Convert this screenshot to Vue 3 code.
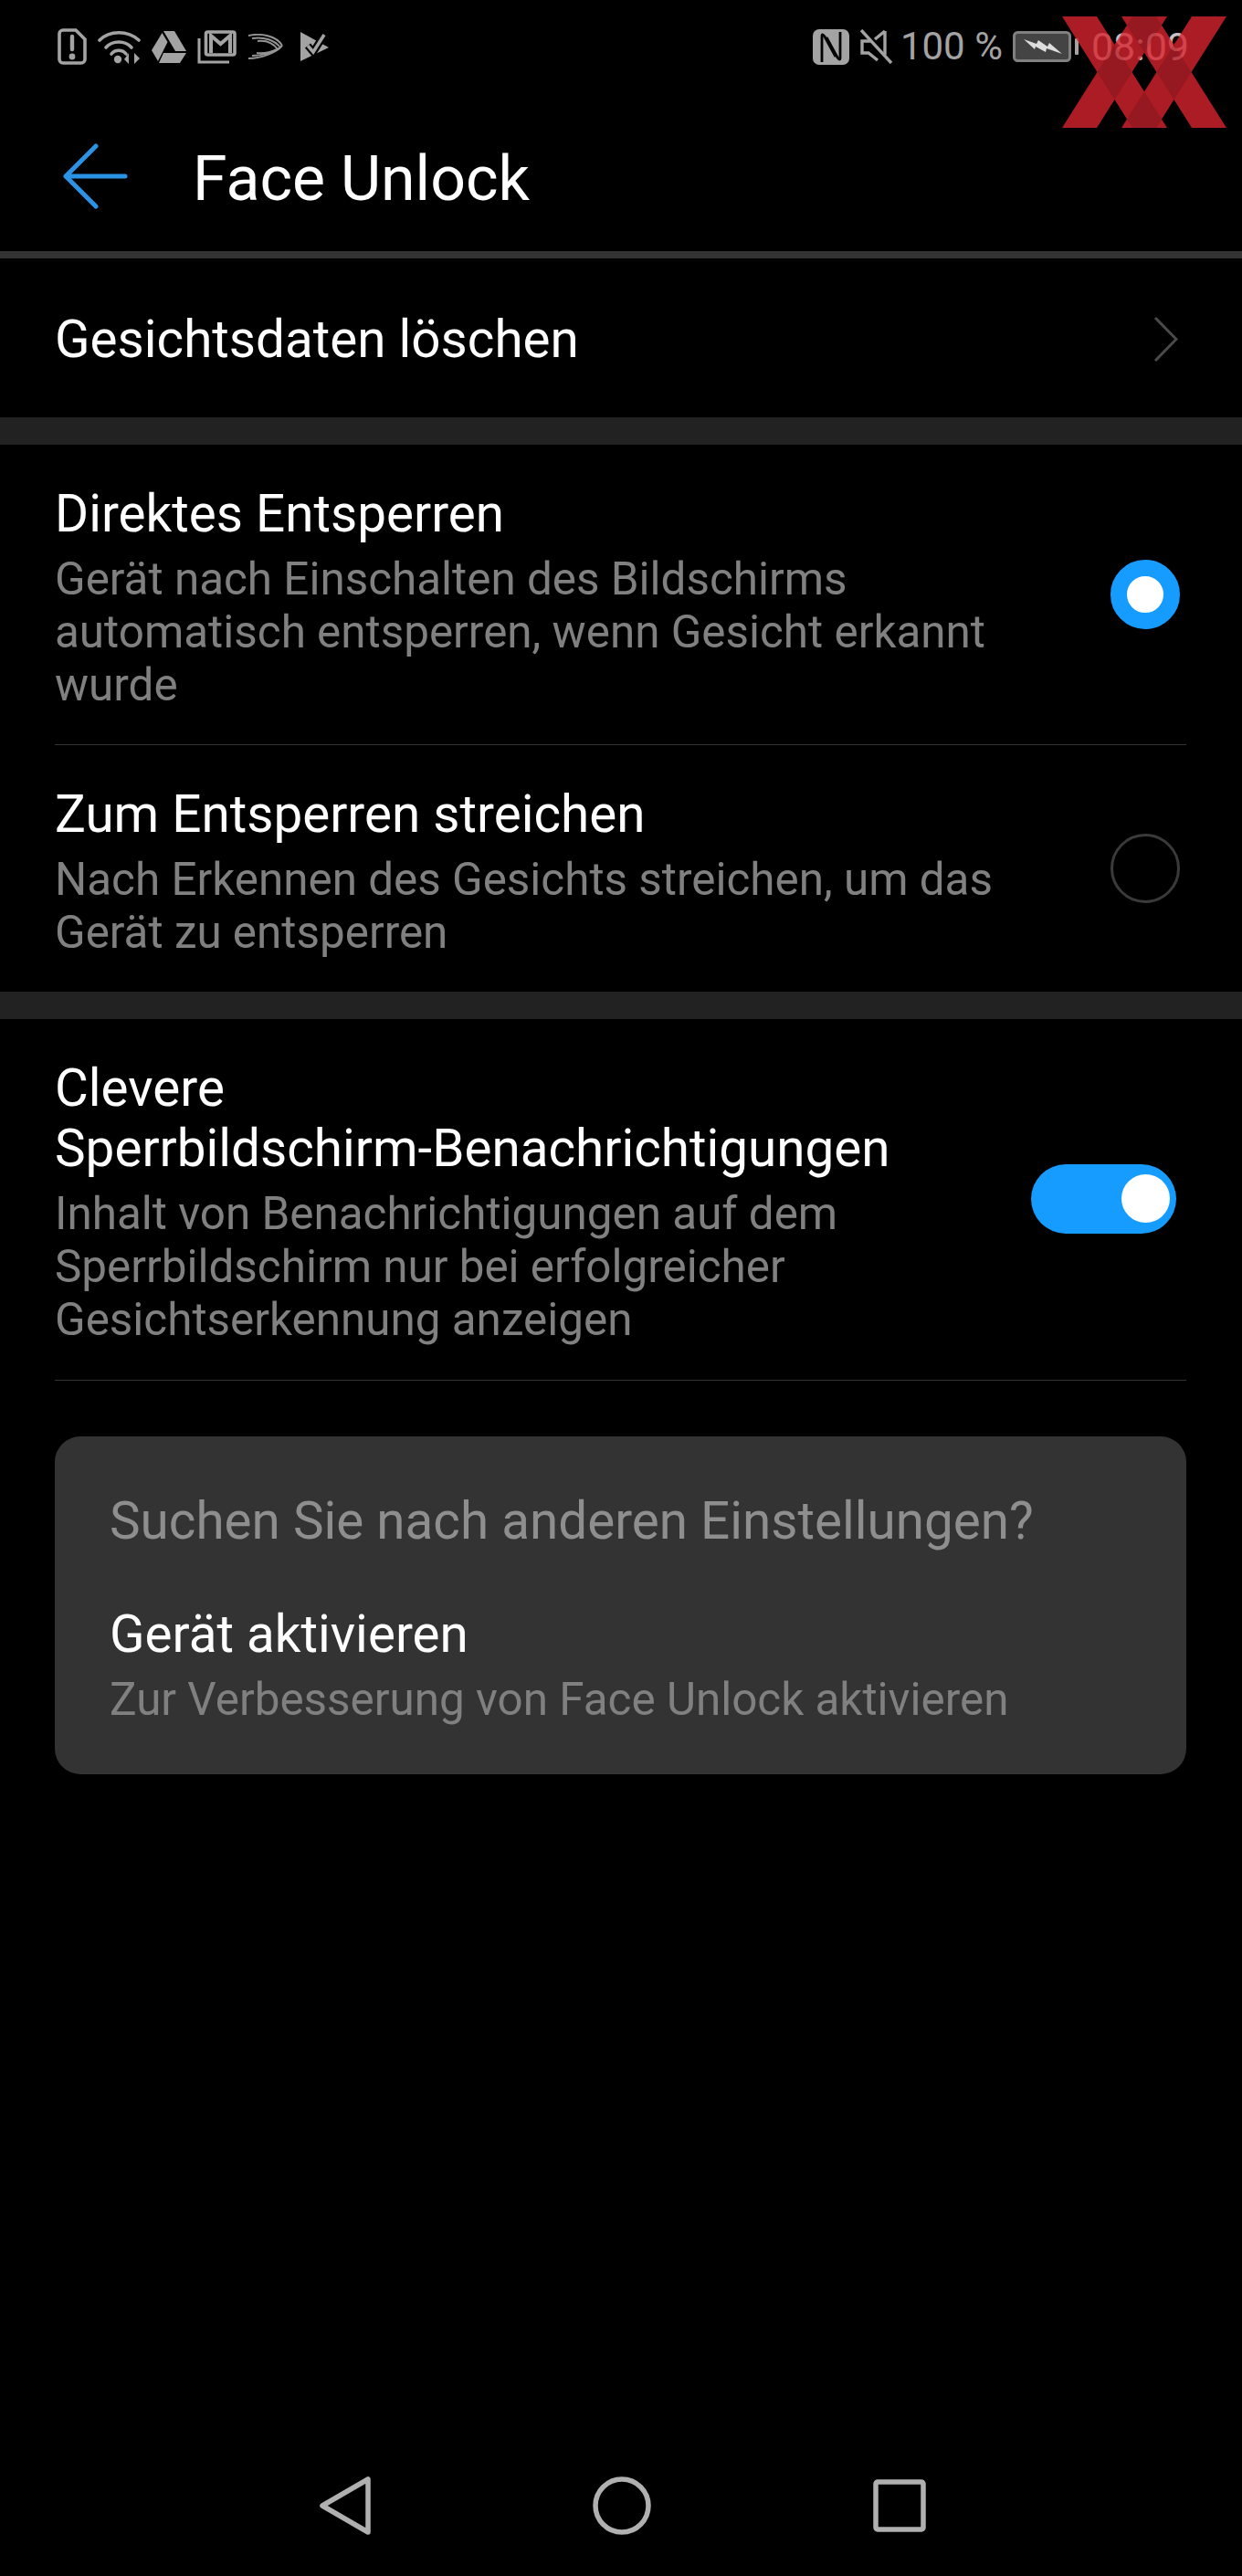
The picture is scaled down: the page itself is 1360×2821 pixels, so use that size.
<script setup>
const optionRows = [
  {
    title: 'Direktes Entsperren',
    desc: 'Gerät nach Einschalten des Bildschirms automatisch entsperren, wenn Gesicht erkannt wurde',
    checked: true,
  },
  {
    title: 'Zum Entsperren streichen',
    desc: 'Nach Erkennen des Gesichts streichen, um das Gerät zu entsperren',
    checked: false,
  },
];
</script>

<template>
  <div class="screen">
    <div class="status-bar">
      <div class="status-left">
        <svg class="ic" width="32" height="40" viewBox="0 0 32 40">
          <path d="M6 2H20L30 12V34a4 4 0 0 1-4 4H6a4 4 0 0 1-4-4V6a4 4 0 0 1 4-4Z" fill="none" stroke="#a3a3a3" stroke-width="3.6" />
          <path d="M16 9V23" stroke="#a3a3a3" stroke-width="4.4" stroke-linecap="round" />
          <circle cx="16" cy="31" r="3.4" fill="#a3a3a3" />
        </svg>
        <svg class="ic" width="47" height="39" viewBox="0 0 47 39">
          <path d="M2 12C13 1 33 1 45 12" fill="none" stroke="#a3a3a3" stroke-width="3.6" stroke-linecap="round" />
          <path d="M9 20C16 12 30 12 37 20" fill="none" stroke="#a3a3a3" stroke-width="3.6" stroke-linecap="round" />
          <path d="M15 27C19 22 27 22 31 27" fill="none" stroke="#a3a3a3" stroke-width="3.6" stroke-linecap="round" />
          <circle cx="22" cy="33" r="4.2" fill="#a3a3a3" />
          <path d="M34 26V38L29 33Z" fill="#a3a3a3" />
          <path d="M40 26V38L46 32Z" fill="#a3a3a3" />
        </svg>
        <svg class="ic" width="38" height="35" viewBox="0 0 38 35">
          <path d="M13 0H25L38 22H26Z" fill="#a3a3a3" />
          <path d="M11.500 2L17.500 12L7 33L0 21Z" fill="#a3a3a3" />
          <path d="M13 24H38L31 35H8Z" fill="#a3a3a3" />
        </svg>
        <svg class="ic" width="43" height="37" viewBox="0 0 43 37">
          <rect x="9.500" y="2" width="31.500" height="25" rx="2" fill="none" stroke="#a3a3a3" stroke-width="3.600" />
          <path d="M15 25V6L25.500 15L36 6V25" fill="none" stroke="#a3a3a3" stroke-width="4" />
          <path d="M2 9V35H35" fill="none" stroke="#a3a3a3" stroke-width="3" />
        </svg>
        <svg class="ic" width="39" height="28" viewBox="0 0 39 28">
          <g fill="none" stroke="#949494" stroke-width="2">
            <path d="M1 2C14 -1 32 2 38 13" />
            <path d="M5 5C18 3 30 7 36 15" />
            <path d="M11 8C20 7 28 10 33 17" />
            <path d="M38 13C32 20 16 27 1 27" />
            <path d="M36 15C28 20 16 24 5 24" />
            <path d="M33 17C26 20 18 22 10 21" />
          </g>
        </svg>
        <svg class="ic play" width="31" height="32" viewBox="0 0 31 32">
          <path d="M0 0L31 17L0 32Z" fill="#a3a3a3" />
          <path d="M8 15L14 22L26 3" fill="none" stroke="#000" stroke-width="8" />
          <path d="M8 15L14 22L26 3" fill="none" stroke="#a3a3a3" stroke-width="3.600" />
        </svg>
      </div>
      <div class="status-right">
        <svg class="ic" width="40" height="39" viewBox="0 0 40 39">
          <rect width="40" height="39" rx="7" fill="#a3a3a3" />
          <path d="M10 36V8Q10 4 13 8L25 30" fill="none" stroke="#000" stroke-width="2.800" />
          <path d="M30 3V31Q30 35 27 31L15 9" fill="none" stroke="#000" stroke-width="2.800" />
        </svg>
        <svg class="ic" width="37" height="38" viewBox="0 0 37 38">
          <path d="M28 2V28M28 2L17 11M12 13H3V26H10L20 34" fill="none" stroke="#a3a3a3" stroke-width="3.400" />
          <path d="M2 1L35 37" stroke="#a3a3a3" stroke-width="3.400" />
        </svg>
        <span class="percent">100 %</span>
        <svg class="ic" width="72" height="34" viewBox="0 0 72 34">
          <rect x="1.500" y="1.500" width="61" height="31" rx="4" fill="#444" stroke="#808080" stroke-width="3" />
          <path d="M12 9L26 14L28 10L38 17L40 13L54 25L37 19L36 23L25 17L24 20Z" fill="#ddd" />
          <rect x="68" y="8" width="4" height="18" rx="1" fill="#a3a3a3" />
        </svg>
        <span class="time">08:09</span>
      </div>
      <svg class="watermark" width="180" height="122" viewBox="0 0 180 122">
        <defs>
          <clipPath id="wmA"><polygon points="0,0 38,0 115,122 77,122" /></clipPath>
          <clipPath id="wmB"><polygon points="77,0 115,0 38,122 0,122" /></clipPath>
          <clipPath id="wmC"><polygon points="65,0 103,0 180,122 142,122" /></clipPath>
        </defs>
        <g opacity="0.8">
          <g fill="#d7232d">
            <polygon points="0,0 38,0 115,122 77,122" />
            <polygon points="77,0 115,0 38,122 0,122" />
            <polygon points="65,0 103,0 180,122 142,122" />
            <polygon points="142,0 180,0 103,122 65,122" />
          </g>
          <g fill="#bc1f28">
            <polygon points="0,0 38,0 115,122 77,122" clip-path="url(#wmB)" />
            <polygon points="142,0 180,0 103,122 65,122" clip-path="url(#wmC)" />
            <polygon points="65,0 103,0 180,122 142,122" clip-path="url(#wmB)" />
            <polygon points="142,0 180,0 103,122 65,122" clip-path="url(#wmA)" />
          </g>
        </g>
      </svg>
    </div>

    <header class="app-bar">
      <svg class="back" width="72" height="72" viewBox="0 0 72 72">
        <path d="M37 3L4 36L37 69M4 36H69" fill="none" stroke="#2b93e6" stroke-width="5" stroke-linecap="round" stroke-linejoin="round" />
      </svg>
      <h1 class="page-title">Face Unlock</h1>
    </header>
    <div class="band thin"></div>

    <div class="link-row">
      <span class="row-title">Gesichtsdaten löschen</span>
      <svg width="27" height="49" viewBox="0 0 27 49">
        <path d="M2 1L25 24.500L2 48" fill="none" stroke="#4a4a4a" stroke-width="3" />
      </svg>
    </div>
    <div class="band"></div>

    <section class="group">
      <div v-for="row in optionRows" :key="row.title" class="row">
        <div class="row-text">
          <div class="row-title">{{ row.title }}</div>
          <div class="row-desc">{{ row.desc }}</div>
        </div>
        <div class="radio" :class="{ on: row.checked }"></div>
      </div>
    </section>
    <div class="band"></div>

    <section class="group">
      <div class="row tall">
        <div class="row-text">
          <div class="row-title">Clevere<br />Sperrbildschirm-Benachrichtigungen</div>
          <div class="row-desc">Inhalt von Benachrichtigungen auf dem Sperrbildschirm nur bei erfolgreicher Gesichtserkennung anzeigen</div>
        </div>
        <div class="switch"><div class="knob"></div></div>
      </div>
    </section>

    <div class="hint-card">
      <div class="hint-head">Suchen Sie nach anderen Einstellungen?</div>
      <div class="row-title hint-title">Gerät aktivieren</div>
      <div class="hint-sub">Zur Verbesserung von Face Unlock aktivieren</div>
    </div>

    <nav class="nav-bar">
      <svg width="56" height="64" viewBox="0 0 56 64">
        <path d="M53 3V61L3 32Z" fill="none" stroke="#b0b0b0" stroke-width="5.500" stroke-linejoin="round" />
      </svg>
      <svg width="64" height="64" viewBox="0 0 64 64">
        <circle cx="32" cy="32" r="29" fill="none" stroke="#b0b0b0" stroke-width="5.500" />
      </svg>
      <svg width="58" height="58" viewBox="0 0 58 58">
        <rect x="3" y="3" width="52" height="52" rx="2" fill="none" stroke="#b0b0b0" stroke-width="5.500" />
      </svg>
    </nav>
  </div>
</template>

<style scoped>
.screen {
  position: relative;
  width: 1360px;
  height: 2821px;
  background: #000;
  color: #fff;
  font-family: Roboto, "Liberation Sans", sans-serif;
  display: flex;
  flex-direction: column;
  overflow: hidden;
}

.status-bar {
  position: relative;
  height: 100px;
  flex: none;
  display: flex;
  justify-content: space-between;
  padding: 31px 58px 0 63px;
  box-sizing: border-box;
}

.status-left,
.status-right {
  display: flex;
  align-items: center;
  height: 40px;
}

.status-left {
  gap: 12px;
}

.play {
  margin-left: 7px;
}

.status-right {
  gap: 11px;
}

.ic {
  flex: none;
  display: block;
}

.percent {
  font-size: 42px;
  line-height: 40px;
  color: #a3a3a3;
  margin-left: -3px;
}

.time {
  font-size: 43px;
  line-height: 40px;
  color: #c4c4c4;
  margin-left: 3px;
}

.watermark {
  position: absolute;
  left: 1163px;
  top: 18px;
}

.app-bar {
  height: 175px;
  flex: none;
  display: flex;
  align-items: center;
  padding-left: 68px;
  padding-top: 10px;
  box-sizing: border-box;
}

.back {
  flex: none;
}

.page-title {
  margin: 7px 0 0 71px;
  font-size: 68px;
  line-height: 76px;
  font-weight: 400;
}

.band {
  height: 30px;
  flex: none;
  background: #222;
}

.band.thin {
  height: 8px;
  background: #333;
}

.link-row {
  height: 174px;
  flex: none;
  display: flex;
  align-items: center;
  justify-content: space-between;
  padding: 3px 70px 0 60px;
  box-sizing: border-box;
}

.row-title {
  font-size: 56.600px;
  line-height: 66px;
}

.group {
  padding: 0 61px 0 60px;
}

.row {
  display: flex;
  align-items: center;
  justify-content: space-between;
  padding: 43px 0 36px;
  border-bottom: 1px solid #333;
}

.row.tall {
  padding-bottom: 37px;
}

section:nth-of-type(1) .row:last-child {
  border-bottom: none;
}

.row-text {
  width: 1040px;
}

.row-desc {
  margin-top: 9px;
  font-size: 49.400px;
  line-height: 58px;
  color: #808080;
}

.radio {
  width: 76px;
  height: 76px;
  margin: 0 7px 7px 0;
  box-sizing: border-box;
  border: 3px solid #3a3a3a;
  border-radius: 50%;
  flex: none;
}

.radio.on {
  border: 18px solid #169cff;
  background: #fff;
}

.switch {
  width: 159px;
  height: 76px;
  margin: 0 11px 8px 0;
  border-radius: 38px;
  background: #169cff;
  display: flex;
  align-items: center;
  justify-content: flex-end;
  padding-right: 7px;
  box-sizing: border-box;
  flex: none;
}

.knob {
  width: 53px;
  height: 53px;
  border-radius: 50%;
  background: #fff;
}

.hint-card {
  margin: 61px 61px 0 60px;
  height: 370px;
  box-sizing: border-box;
  flex: none;
  border-radius: 28px;
  background: #333;
  padding: 60px 60px 0;
}

.hint-head {
  font-size: 56.600px;
  line-height: 66px;
  color: #8e8e8e;
}

.hint-title {
  margin-top: 58px;
}

.hint-sub {
  margin-top: 9px;
  font-size: 49.400px;
  line-height: 58px;
  color: #808080;
}

.nav-bar {
  margin-top: auto;
  margin-bottom: 45px;
  display: flex;
  align-items: center;
  padding-left: 350px;
  gap: 243px;
  height: 64px;
}
</style>

<style>
html,
body {
  background: #000;
}
</style>
